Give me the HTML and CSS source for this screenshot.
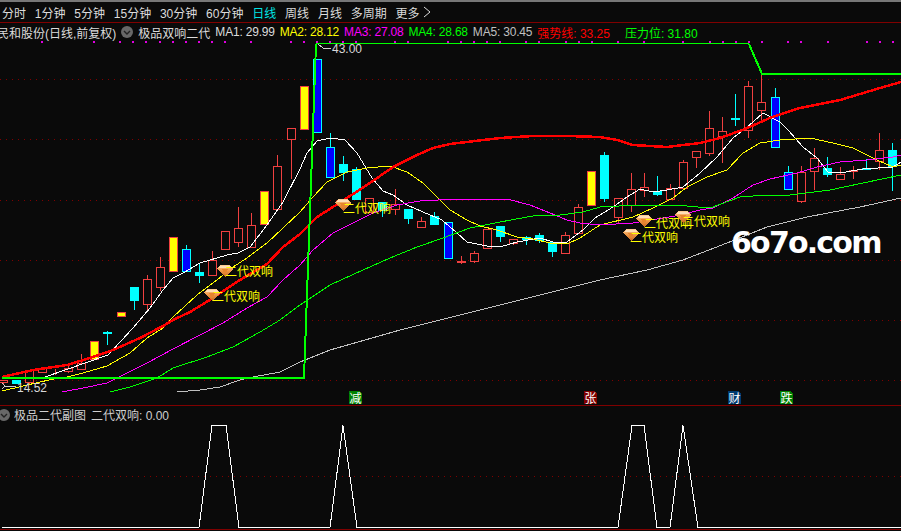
FILE: index.html
```html
<!DOCTYPE html>
<html lang="zh-CN">
<head>
    <meta charset="UTF-8">
    <title>民和股份 日线</title>
    <link rel="stylesheet" href="styles.css">
</head>
<body>
    <div class="toolbar">
        <span>分时</span>
        <span>1分钟</span>
        <span>5分钟</span>
        <span>15分钟</span>
        <span>30分钟</span>
        <span>60分钟</span>
        <span class="active">日线</span>
        <span>周线</span>
        <span>月线</span>
        <span>多周期</span>
        <span class="more">更多
            <svg class="chevron" viewBox="0 0 8 12"><path d="M1 1 L7 6 L1 11"></path></svg>
        </span>
    </div>

    <div class="legend">
        <span class="stock">民和股份(日线,前复权)</span>
        <svg class="toggle" viewBox="0 0 12 12"><use href="#toggle-icon"></use></svg>
        <span>极品双响二代</span>
        <span class="ma-value">MA1: 29.99</span>
        <span class="ma-value yellow">MA2: 28.12</span>
        <span class="ma-value magenta">MA3: 27.08</span>
        <span class="ma-value green">MA4: 28.68</span>
        <span class="ma-value gray">MA5: 30.45</span>
        <span class="red">强势线: 33.25</span>
        <span class="green pressure">压力位: 31.80</span>
    </div>

    <svg class="main-chart" viewBox="0 41 901 364">
        <defs>
            <linearGradient id="gem-fill" x1="0" y1="0" x2="0" y2="1">
                <stop offset="0" stop-color="#ffd09a"></stop>
                <stop offset="0.45" stop-color="#f09a48"></stop>
                <stop offset="1" stop-color="#c8641e"></stop>
            </linearGradient>
            <symbol id="gem" viewBox="0 0 16 12" overflow="visible">
                <polygon points="3,0 13,0 16,4 8,12 0,4" fill="url(#gem-fill)"></polygon>
                <polygon points="3,1 13,1 14,3 2,3" fill="#ffdfb8"></polygon>
                <polygon points="5,4 11,4 8,10" fill="#e8842e"></polygon>
            </symbol>
            <symbol id="toggle-icon" viewBox="0 0 12 12">
                <circle cx="6" cy="6" r="6" fill="#686868"></circle>
                <path d="M3 5 L6 8 L9 5" fill="none" stroke="#222" stroke-width="1.4"></path>
            </symbol>
        </defs>

        <g id="grid"></g>
        <g id="dots"></g>
        <g id="lines-back"></g>
        <g id="candles"></g>
        <g id="lines"></g>

        <path class="tag-arrow" d="M318 44 L323 48 L331 48"></path>
        <text class="price" x="332" y="53">43.00</text>
        <path class="tag-arrow" d="M2 383 L5 386 L16 386 M5 386 L2 389"></path>
        <text class="price" x="17" y="392">14.52</text>

        <use href="#gem" x="217" y="265" width="16" height="12"></use>
        <text class="signal" x="225" y="276">二代双响</text>
        <use href="#gem" x="204" y="289" width="16" height="12"></use>
        <text class="signal" x="212" y="301">二代双响</text>
        <use href="#gem" x="335" y="199" width="16" height="12"></use>
        <text class="signal" x="343" y="213">二代双响</text>
        <use href="#gem" x="636" y="215" width="16" height="12"></use>
        <text class="signal" x="644" y="228">二代双响</text>
        <use href="#gem" x="675" y="211" width="16" height="12"></use>
        <text class="signal" x="682" y="226">二代双响</text>
        <use href="#gem" x="623" y="229" width="16" height="12"></use>
        <text class="signal" x="630" y="242">二代双响</text>

        <text class="watermark" x="731" y="253">6o7o.com</text>

        <path class="tag tag-green" d="M349 391 H359 L362 394 V404 H349 Z"></path>
        <text class="tag-text" x="349.5" y="402.5">减</text>
        <path class="tag tag-red" d="M584 391 H594 L597 394 V404 H584 Z"></path>
        <text class="tag-text" x="584.5" y="402.5">张</text>
        <path class="tag tag-blue" d="M728 391 H738 L741 394 V404 H728 Z"></path>
        <text class="tag-text" x="728.5" y="402.5">财</text>
        <path class="tag tag-green" d="M780 391 H790 L793 394 V404 H780 Z"></path>
        <text class="tag-text" x="780.5" y="402.5">跌</text>
    </svg>

    <div class="sub-panel">
        <div class="sub-legend">
            <svg class="toggle" viewBox="0 0 12 12"><use href="#toggle-icon"></use></svg>
            <span>极品二代副图</span>
            <span>二代双响: 0.00</span>
        </div>
        <svg class="sub-chart" viewBox="0 423 901 106">
            <line class="grid-dot" x1="0" y1="476.5" x2="901" y2="476.5"></line>
            <polyline class="pulse" points="2,527.5 199,527.5 212,425.5 226,425.5 239,527.5 330,527.5 343,425.5 357,527.5 618,527.5 632,425.5 644,425.5 657,527.5 670,527.5 683,425.5 698,527.5 901,527.5"></polyline>
        </svg>
    </div>

    <script src="chart.js"></script>
</body>
</html>
```

FILE: styles.css
```css
* {
    box-sizing: border-box;
}
body {
    margin: 0;
    width: 901px;
    height: 531px;
    overflow: hidden;
    background: #0a0a0a;
    color: #dcdcdc;
    font-family: "Liberation Sans", "Noto Sans CJK SC", sans-serif;
    font-size: 12px;
}
svg {
    display: block;
}
.toolbar {
    display: flex;
    gap: 8.8px;
    align-items: center;
    height: 23px;
    padding-left: 2px;
    border-top: 2px solid #777;
    border-bottom: 1px solid #800000;
    white-space: nowrap;
}
.toolbar .active {
    color: #00e5e5;
}
.more {
    display: flex;
    gap: 3px;
    align-items: center;
}
.chevron {
    width: 8px;
    height: 12px;
    fill: none;
    stroke: #dcdcdc;
}
.legend {
    display: flex;
    gap: 5px;
    align-items: center;
    height: 18px;
    margin-left: -3px;
    white-space: nowrap;
}
.toggle {
    flex: none;
    width: 12px;
    height: 12px;
}
.ma-value {
    letter-spacing: -0.2px;
}
.yellow {
    color: #ffff00;
}
.magenta {
    color: #ff00ff;
}
.green {
    color: #00ff00;
}
.gray {
    color: #c0c0c0;
}
.red {
    color: #ff0000;
}
.pressure {
    margin-left: 10px;
}

.main-chart {
    width: 901px;
    height: 364px;
    shape-rendering: crispEdges;
}
.grid-dot {
    stroke: #800000;
    stroke-width: 1;
    stroke-dasharray: 1 5;
}
.mark {
    fill: #e000e0;
}
.candle-up {
    fill: none;
    stroke: #f04040;
}
.candle-flag {
    fill: #ffff00;
    stroke: #f04040;
}
.candle-down {
    fill: #00ffff;
    stroke: #00ffff;
}
.candle-blue {
    fill: #0000ff;
    stroke: #00ffff;
}
.wick-up {
    stroke: #f04040;
}
.wick-down {
    stroke: #00ffff;
}
.ma {
    fill: none;
    stroke-width: 1;
}
.ma1 {
    stroke: #ffffff;
}
.ma2 {
    stroke: #ffff00;
}
.ma3 {
    stroke: #ff00ff;
}
.ma4 {
    stroke: #00ff00;
}
.ma5 {
    stroke: #c0c0c0;
}
.trend {
    fill: none;
    stroke: #ff0000;
    stroke-width: 2.5;
}
.pressure-line {
    fill: none;
    stroke: #00ff00;
    stroke-width: 2;
}
.pressure-top {
    stroke: #00ff00;
    stroke-width: 1;
}
.tag-arrow {
    fill: none;
    stroke: #d0d0d0;
    stroke-width: 1;
}
.price {
    fill: #d8d8d8;
    font-size: 12px;
}
.signal {
    fill: #ffff00;
    font-size: 12px;
}
.watermark {
    fill: #ffffff;
    font-family: "DejaVu Sans", sans-serif;
    font-weight: 700;
    font-size: 30px;
    letter-spacing: -1.8px;
}
.tag-green {
    fill: #008000;
}
.tag-red {
    fill: #800000;
}
.tag-blue {
    fill: #003a70;
}
.tag-text {
    fill: #ffffff;
    font-size: 12px;
}

.sub-panel {
    height: 125px;
    border-top: 1px solid #800000;
    border-bottom: 1px solid #800000;
    margin-bottom: 1px;
}
.sub-legend {
    display: flex;
    gap: 5px;
    align-items: center;
    height: 17px;
    margin-left: -2px;
    color: #cfcfcf;
}
.sub-legend .toggle {
    margin-right: -1px;
}
.sub-chart {
    width: 901px;
    height: 106px;
    shape-rendering: crispEdges;
}
.pulse {
    fill: none;
    stroke: #ffffff;
    stroke-width: 1;
}
```

FILE: chart.js
```js
const NS = 'http://www.w3.org/2000/svg';

// top, bottom, high, low, type (r hollow red, c cyan, b blue, y yellow)
const candles = [
    [380, 382, 380, 384, 'r'],
    [380, 383, 380, 383, 'c'],
    [370, 382, 370, 385, 'r'],
    [368, 372, 368, 372, 'r'],
    [371, 371, 369, 375, 'r'],
    [368, 371, 365, 373, 'r'],
    [363, 369, 354, 369, 'r'],
    [341, 359, 341, 359, 'y'],
    [332, 333, 331, 345, 'c'],
    [312, 316, 312, 316, 'y'],
    [287, 300, 287, 310, 'c'],
    [279, 304, 275, 310, 'r'],
    [267, 287, 257, 291, 'r'],
    [237, 271, 237, 271, 'y'],
    [249, 271, 245, 271, 'b'],
    [272, 275, 263, 283, 'c'],
    [260, 275, 251, 275, 'r'],
    [231, 249, 231, 249, 'r'],
    [228, 242, 207, 247, 'r'],
    [225, 247, 213, 248, 'r'],
    [191, 224, 191, 224, 'y'],
    [166, 209, 155, 209, 'r'],
    [128, 139, 128, 179, 'r'],
    [86, 129, 86, 129, 'y'],
    [59, 132, 59, 132, 'b'],
    [147, 177, 133, 177, 'b'],
    [164, 172, 156, 181, 'c'],
    [169, 199, 167, 199, 'c'],
    [198, 212, 198, 212, 'r'],
    [202, 210, 202, 217, 'c'],
    [204, 209, 189, 215, 'r'],
    [209, 218, 209, 224, 'c'],
    [221, 227, 217, 227, 'r'],
    [216, 224, 212, 225, 'c'],
    [222, 258, 222, 258, 'b'],
    [261, 262, 256, 264, 'r'],
    [253, 261, 251, 263, 'r'],
    [229, 248, 229, 248, 'r'],
    [226, 236, 226, 242, 'c'],
    [239, 243, 239, 245, 'r'],
    [237, 239, 236, 245, 'c'],
    [235, 240, 233, 243, 'c'],
    [242, 251, 242, 257, 'c'],
    [235, 253, 232, 253, 'r'],
    [207, 233, 204, 233, 'r'],
    [171, 205, 171, 205, 'y'],
    [155, 198, 152, 202, 'c'],
    [198, 217, 198, 223, 'r'],
    [189, 205, 173, 212, 'r'],
    [187, 190, 173, 197, 'r'],
    [191, 194, 176, 196, 'c'],
    [188, 199, 184, 199, 'r'],
    [162, 188, 160, 190, 'r'],
    [151, 157, 151, 168, 'r'],
    [128, 153, 111, 156, 'r'],
    [131, 136, 117, 163, 'r'],
    [118, 119, 94, 126, 'c'],
    [86, 130, 81, 138, 'r'],
    [102, 110, 74, 120, 'r'],
    [97, 147, 88, 147, 'b'],
    [172, 189, 166, 189, 'b'],
    [172, 201, 166, 203, 'r'],
    [158, 171, 148, 190, 'r'],
    [168, 174, 157, 177, 'c'],
    [174, 179, 167, 179, 'r'],
    [170, 171, 166, 179, 'r'],
    [168, 169, 159, 169, 'c'],
    [150, 161, 133, 170, 'r'],
    [150, 166, 143, 191, 'c']
];

const lines = {
    ma1: '45,377 108,355 133,328 150,308 163,290 173,278 183,273 200,263 217,258 227,255 238,253 250,247 267,225 283,202 300,169 307,153 317,141 330,138 345,140 357,153 372,178 383,191 393,195 407,205 423,212 442,220 457,233 467,242 487,246 500,247 517,242 540,238 553,242 567,242 583,230 595,218 613,207 627,197 640,189 653,192 667,190 683,187 700,173 717,157 733,138 745,129 763,113 780,122 788,130 803,147 817,158 828,172 840,173 863,169 893,167 901,162',
    ma2: '2,391 40,382 58,378 67,377 83,373 107,366 130,353 147,338 163,328 173,317 197,295 217,280 233,267 247,258 267,243 283,228 300,212 313,197 327,182 347,172 367,168 390,166 407,172 423,183 440,200 450,210 467,220 480,226 497,230 517,237 533,239 550,243 567,244 580,238 600,225 633,217 653,208 673,198 687,187 707,177 727,170 743,153 760,143 780,140 810,138 833,143 853,148 877,160 893,167 901,165',
    ma3: '62,392 83,388 107,383 123,375 147,363 173,349 200,335 223,323 247,308 267,297 283,280 300,265 313,250 333,233 353,223 373,213 397,205 420,201 457,199 507,199 530,205 550,213 567,220 580,223 600,225 633,223 675,216 700,210 713,208 733,198 753,185 770,179 797,173 817,167 840,162 867,160 893,157 901,155',
    ma4: '110,392 130,387 157,378 173,368 207,357 233,347 260,332 280,320 300,305 330,285 363,270 390,258 417,247 443,238 470,228 500,222 533,216 560,215 583,212 600,207 638,205 675,205 710,208 740,197 767,195 790,195 830,190 863,183 901,175',
    ma5: '177,392 200,390 220,387 240,380 253,377 280,372 300,362 330,350 400,330 500,305 600,280 647,270 683,260 727,243 767,227 807,217 860,207 901,198'
};
const trend = '2,377 33,370 67,365 90,358 113,350 140,338 163,326 175,319 190,312 213,298 240,280 267,264 283,247 300,234 317,217 333,207 367,185 393,167 417,155 433,148 450,144 467,142 500,138 533,136 567,136 600,137 617,140 633,145 667,147 700,143 720,138 745,129 772,117 800,108 840,100 880,88 901,82';

const markXs = [42, 94, 120, 133, 146, 160, 173, 186, 199, 212, 225, 251, 291, 304, 317, 330, 343, 356, 395, 408, 448, 461, 474, 487, 500, 526, 539, 566, 579, 592, 618, 644, 683, 710, 723, 736, 749, 762, 788, 801, 828, 867, 880, 893];

function add(parent, tag, attrs) {
    const el = document.createElementNS(NS, tag);
    for (const key in attrs) {
        el.setAttribute(key, attrs[key]);
    }
    parent.appendChild(el);
    return el;
}

function drawGrid() {
    const grid = document.getElementById('grid');
    [79.5, 139.5, 200.5, 260.5, 320.5, 380.5].forEach(y => {
        add(grid, 'line', { class: 'grid-dot', x1: 0, y1: y, x2: 901, y2: y });
    });
    const dots = document.getElementById('dots');
    markXs.forEach(x => {
        add(dots, 'rect', { class: 'mark', x: x - 1, y: 41, width: 2, height: 2 });
    });
}

function drawCandles() {
    const group = document.getElementById('candles');
    const bodyClass = { r: 'candle-up', c: 'candle-down', b: 'candle-blue', y: 'candle-flag' };

    candles.forEach((c, i) => {
        const [top, bottom, high, low, type] = c;
        const x = Math.floor(3.3 + 13.08 * i) + 0.5;
        const wick = type === 'r' || type === 'y' ? 'wick-up' : 'wick-down';

        if (high < top) {
            add(group, 'line', { class: wick, x1: x, y1: high, x2: x, y2: top });
        }
        if (low > bottom) {
            add(group, 'line', { class: wick, x1: x, y1: bottom, x2: x, y2: low });
        }
        add(group, 'rect', {
            class: bodyClass[type],
            x: x - 4,
            y: top + 0.5,
            width: 8,
            height: bottom - top
        });
    });
}

function drawLines() {
    const group = document.getElementById('lines');
    for (const name in lines) {
        add(group, 'polyline', { class: 'ma ' + name, points: lines[name] });
    }
    add(group, 'polyline', { class: 'trend', points: trend });
    add(group, 'polyline', { class: 'pressure-line', points: '2,378 304,378 316,44' });
    add(group, 'line', { class: 'pressure-top', x1: 316, y1: 43.5, x2: 749, y2: 43.5 });
    add(group, 'polyline', { class: 'pressure-line', points: '749,44 762,74 901,74' });
}

drawGrid();
drawCandles();
drawLines();
```
